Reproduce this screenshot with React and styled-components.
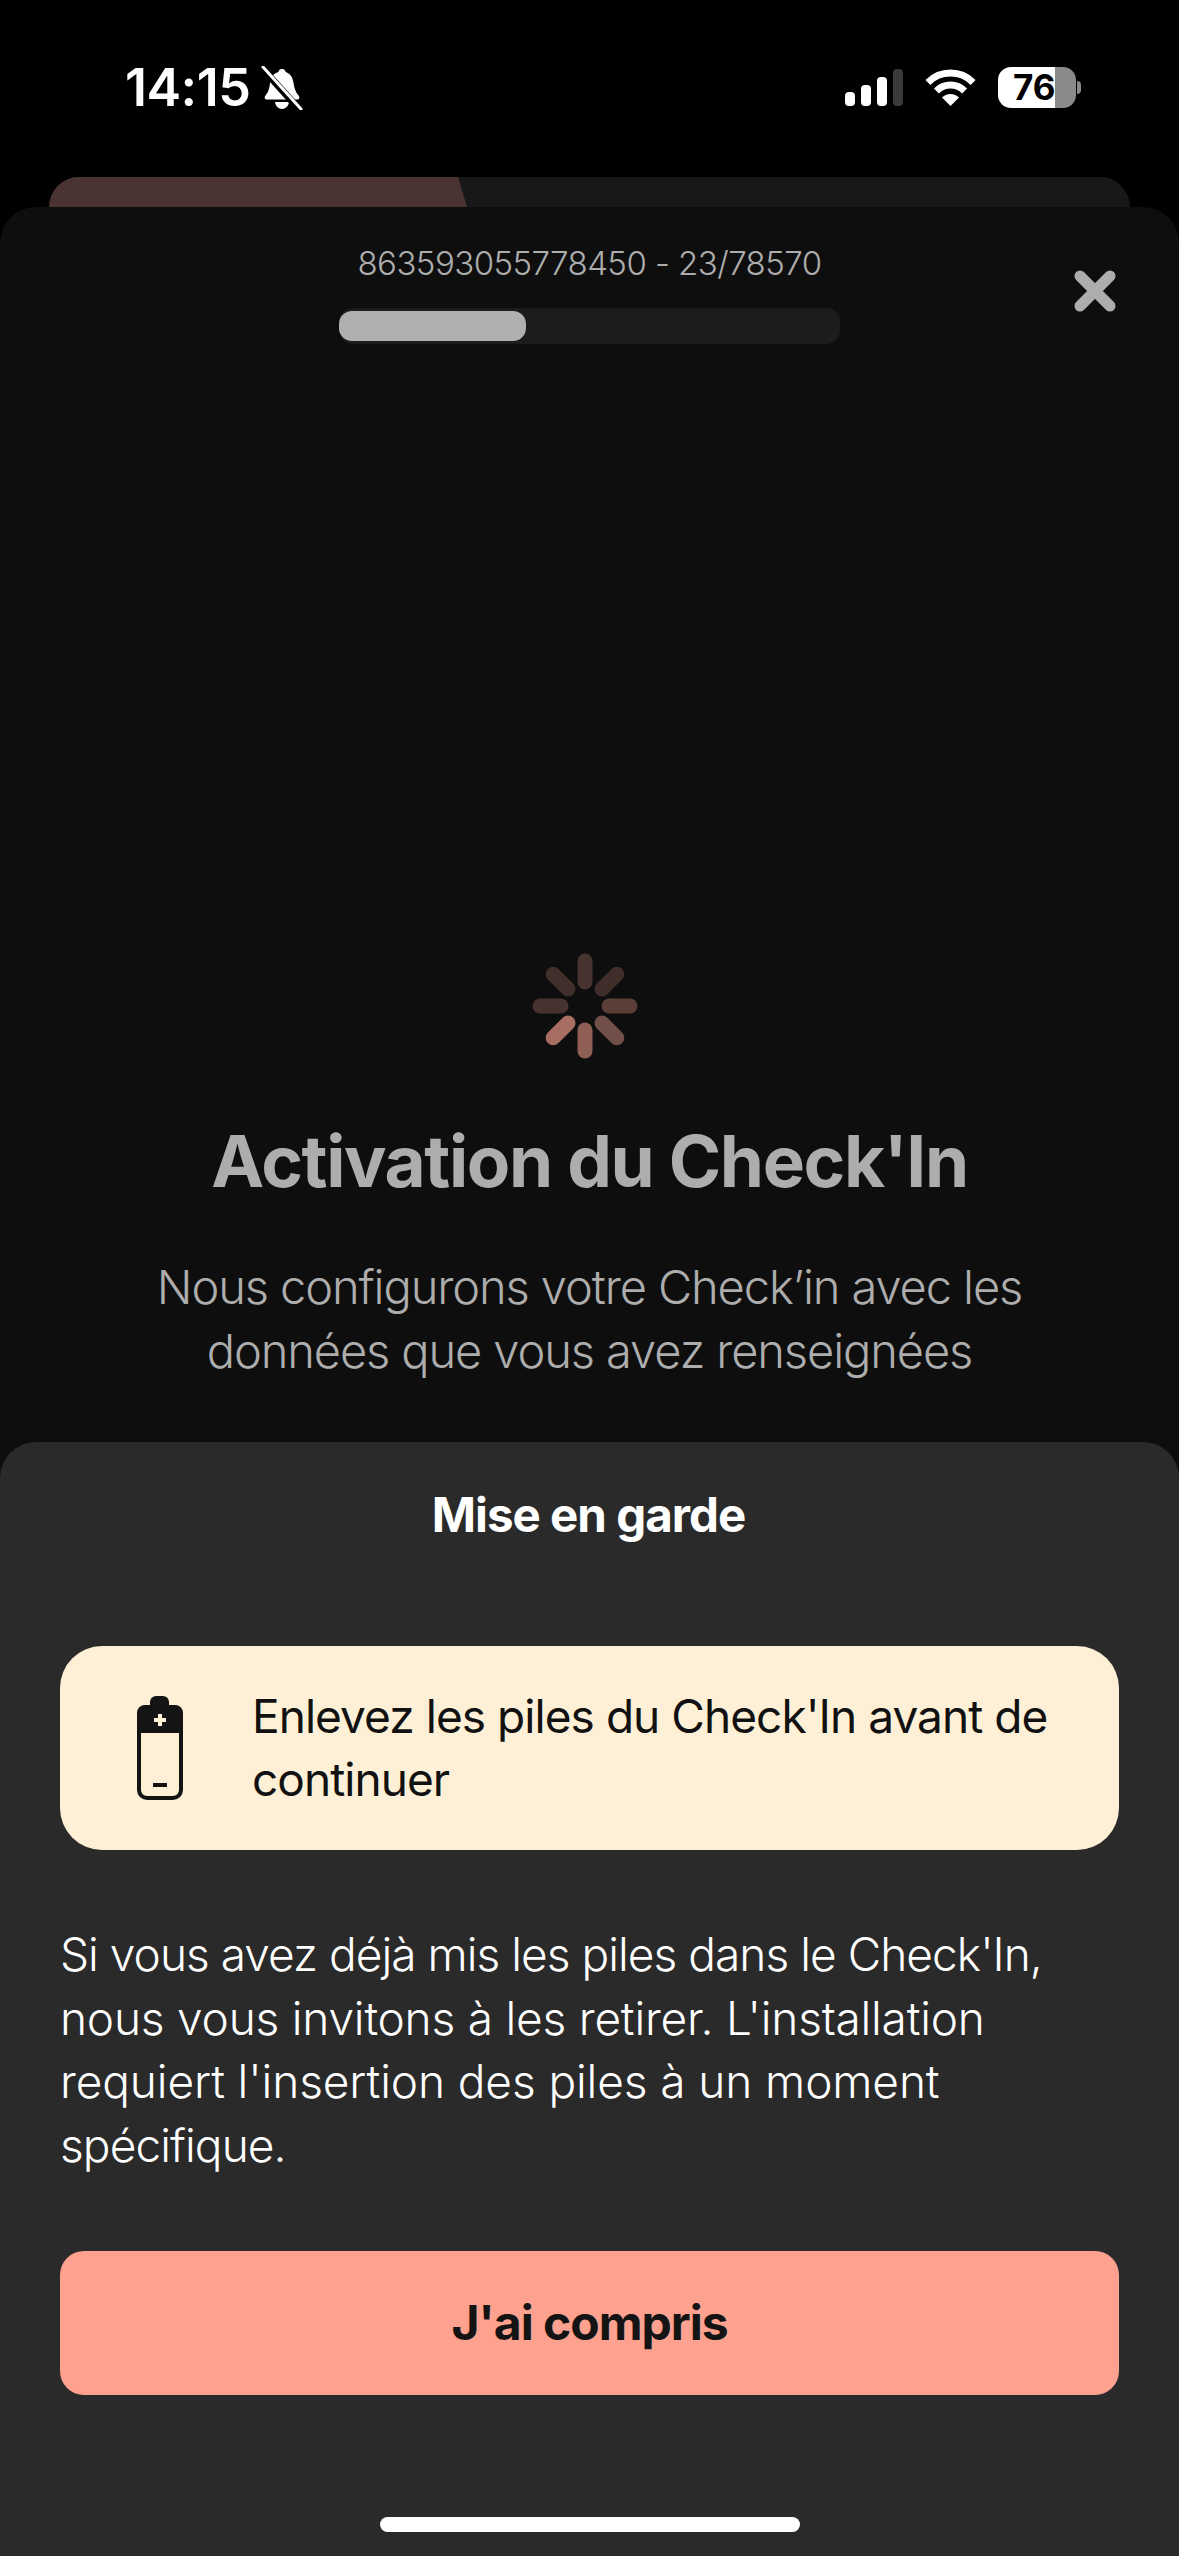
import styled, { createGlobalStyle } from "styled-components";

const GlobalStyle = createGlobalStyle`
  html, body {
    margin: 0;
    padding: 0;
    background: #000;
  }
  * {
    box-sizing: border-box;
  }
`;

const Page = styled.div`
  position: relative;
  width: 1179px;
  height: 2556px;
  overflow: hidden;
  display: flex;
  flex-direction: column;
  background: #000;
  font-family: Inter, "Liberation Sans", sans-serif;
`;

const StatusBar = styled.div`
  height: 177px;
  flex-shrink: 0;
  padding: 62px 98px 0 125px;
  display: flex;
  justify-content: space-between;
  align-items: flex-start;
  color: #fff;
`;

const StatusLeft = styled.div`
  display: flex;
  align-items: center;
  gap: 11px;
`;

const Time = styled.div`
  font-size: 52px;
  font-weight: 600;
  line-height: 52px;
  letter-spacing: -0.5px;
`;

const StatusRight = styled.div`
  display: flex;
  align-items: center;
  gap: 22px;
  padding-top: 5px;
`;

const BatteryWrap = styled.div`
  display: flex;
  align-items: center;
  gap: 1px;
`;

const BatteryBody = styled.div`
  width: 78px;
  height: 41px;
  border-radius: 13px;
  background: linear-gradient(to right, #fff 0 57px, #8a8a8a 57px);
  color: #000;
  font-size: 35px;
  font-weight: 700;
  line-height: 41px;
  padding-left: 15px;
`;

const BatteryNub = styled.div`
  width: 4px;
  height: 13px;
  border-radius: 0 6px 6px 0;
  background: #8a8a8a;
`;

const BackCard = styled.div`
  position: relative;
  height: 60px;
  flex-shrink: 0;
  margin: 0 49px -30px;
  border-radius: 30px 30px 0 0;
  background: #18181a;
  overflow: hidden;
`;

const BackCardFill = styled.div`
  width: 427px;
  height: 100%;
  background: #4a3431;
  clip-path: polygon(0 0, 409px 0, 100% 100%, 0 100%);
`;

const Sheet = styled.div`
  position: relative;
  flex: 1;
  border-radius: 36px 36px 0 0;
  background: #0e0e0e;
  display: flex;
  flex-direction: column;
  align-items: center;
  padding-top: 36px;
`;

const Serial = styled.div`
  font-size: 33px;
  font-weight: 300;
  line-height: 40px;
  color: #adadad;
  letter-spacing: -0.55px;
`;

const Track = styled.div`
  width: 501px;
  height: 36px;
  margin-top: 25px;
  border-radius: 14px;
  background: #1c1c1c;
  display: flex;
  align-items: center;
`;

const TrackFill = styled.div`
  height: 30px;
  border-radius: 13px;
  background: #b0b0b0;
`;

const CloseButton = styled.div`
  position: absolute;
  top: 63px;
  right: 63px;
  width: 42px;
  height: 42px;
  line-height: 0;
`;

const Spinner = styled.svg`
  margin: 609px 9px 0 0;
  width: 106px;
  height: 106px;
  flex-shrink: 0;
`;

const Title = styled.h1`
  margin: 59px 0 0;
  font-size: 71px;
  font-weight: 700;
  line-height: 86px;
  color: #adadad;
  letter-spacing: -1.4px;
`;

const Subtitle = styled.p`
  margin: 51px 0 0;
  font-size: 47px;
  font-weight: 300;
  line-height: 64px;
  color: #adadad;
  text-align: center;
  letter-spacing: -1.1px;
`;

const BottomSheet = styled.div`
  position: absolute;
  left: 0;
  right: 0;
  bottom: 0;
  height: 1114px;
  border-radius: 36px 36px 0 0;
  background: #2a2a2a;
  padding: 40px 60px 0;
  display: flex;
  flex-direction: column;
`;

const SheetTitle = styled.h2`
  margin: 0 2px 0 0;
  font-size: 47.500px;
  font-weight: 700;
  line-height: 66px;
  color: #fff;
  text-align: center;
  letter-spacing: -1px;
`;

const Notice = styled.div`
  margin-top: 98px;
  height: 204px;
  border-radius: 42px;
  background: #fef0d6;
  display: flex;
  align-items: center;
  gap: 69px;
  padding: 0 40px 0 77px;
`;

const NoticeText = styled.div`
  font-size: 46px;
  font-weight: 400;
  line-height: 63px;
  color: #111;
  letter-spacing: -0.95px;
`;

const Paragraph = styled.p`
  margin: 73px 0 0;
  font-size: 46px;
  font-weight: 300;
  line-height: 63.7px;
  color: #fff;
`;

const ParagraphLine = styled.span`
  display: block;
  letter-spacing: ${(props) => props.$spacing};
`;

const PrimaryButton = styled.button`
  margin-top: 73px;
  height: 144px;
  border: none;
  border-radius: 24px;
  background: #ffa18f;
  color: #141414;
  font-family: inherit;
  font-size: 48px;
  font-weight: 700;
  letter-spacing: -1px;
`;

const HomeIndicator = styled.div`
  position: absolute;
  left: 380px;
  bottom: 24px;
  width: 420px;
  height: 15px;
  border-radius: 8px;
  background: #fff;
`;

const spinnerBars = [
  { angle: 0, color: "#46322e" },
  { angle: 45, color: "#402e2a" },
  { angle: 90, color: "#5a3f39" },
  { angle: 135, color: "#72504a" },
  { angle: 180, color: "#8f5f56" },
  { angle: 225, color: "#a86e63" },
  { angle: 270, color: "#46322e" },
  { angle: 315, color: "#412f2b" },
];

const BellSlash = () => (
  <svg width="42" height="44" viewBox="0 0 42 44">
    <path
      d="M21 3c-2 0-3.400 1.300-3.600 3C12 7.500 9.500 12 9 17c-.4 5-1.500 9-4.500 12.500-1.500 2-1 4 1.500 4h30c2.500 0 3-2 1.500-4C34.500 26 33 21 32.500 17 32 12 29.500 7.500 24.600 6 24.400 4.300 23 3 21 3z"
      fill="#fff"
    />
    <path d="M14 36h14c-.5 4-3.500 7-7 7s-6.500-3-7-7z" fill="#fff" />
    <path d="M2 3l36 40" stroke="#000" strokeWidth="7" />
    <path d="M2 1l38 42" stroke="#fff" strokeWidth="3" strokeLinecap="round" />
  </svg>
);

const SignalBars = () => (
  <svg width="58" height="37" viewBox="0 0 58 37">
    <rect x="0" y="23" width="10" height="14" rx="4" fill="#fff" />
    <rect x="16" y="16" width="10" height="21" rx="4" fill="#fff" />
    <rect x="32" y="8" width="10" height="29" rx="4" fill="#fff" />
    <rect x="48" y="0" width="10" height="37" rx="4" fill="#3a3a3a" />
  </svg>
);

const Wifi = () => (
  <svg width="51" height="37" viewBox="0 0 51 37" fill="none">
    <path d="M2.900 13.400A32 32 0 0 1 48.100 13.400" stroke="#fff" strokeWidth="7" />
    <path d="M11.400 21.900A20 20 0 0 1 39.600 21.900" stroke="#fff" strokeWidth="7" />
    <path d="M25.500 37L17 28.500A12 12 0 0 1 34 28.500Z" fill="#fff" />
  </svg>
);

const BatteryIcon = () => (
  <svg width="46" height="104" viewBox="0 0 46 104" style={{ flexShrink: 0 }}>
    <path d="M13 10V6a6 6 0 0 1 6-6h7a6 6 0 0 1 6 6v4z" fill="#141414" />
    <rect x="2" y="11" width="42" height="91" rx="8" fill="none" stroke="#141414" strokeWidth="4" />
    <path d="M0 37V17a8 8 0 0 1 8-8h30a8 8 0 0 1 8 8v20z" fill="#141414" />
    <path d="M23 18v12M17 24h12" stroke="#fef0d6" strokeWidth="4" />
    <rect x="16" y="87" width="14" height="4" fill="#141414" />
  </svg>
);

const App = () => {
  return (
    <Page>
      <GlobalStyle />
      <StatusBar>
        <StatusLeft>
          <Time>14:15</Time>
          <BellSlash />
        </StatusLeft>
        <StatusRight>
          <SignalBars />
          <Wifi />
          <BatteryWrap>
            <BatteryBody>76</BatteryBody>
            <BatteryNub />
          </BatteryWrap>
        </StatusRight>
      </StatusBar>
      <BackCard>
        <BackCardFill />
      </BackCard>
      <Sheet>
        <Serial>863593055778450 - 23/78570</Serial>
        <Track>
          <TrackFill style={{ width: `${(187 / 501) * 100}%` }} />
        </Track>
        <CloseButton>
          <svg width="42" height="42" viewBox="0 0 42 42">
            <path d="M6 6l30 30M36 6L6 36" stroke="#adadad" strokeWidth="11" strokeLinecap="round" />
          </svg>
        </CloseButton>
        <Spinner viewBox="-53 -53 106 106">
          {spinnerBars.map((bar) => (
            <line
              key={bar.angle}
              x1="0"
              y1="-24"
              x2="0"
              y2="-45"
              stroke={bar.color}
              strokeWidth="15"
              strokeLinecap="round"
              transform={`rotate(${bar.angle})`}
            />
          ))}
        </Spinner>
        <Title>Activation du Check'In</Title>
        <Subtitle>
          Nous configurons votre Check’in avec les
          <br />
          données que vous avez renseignées
        </Subtitle>
      </Sheet>
      <BottomSheet>
        <SheetTitle>Mise en garde</SheetTitle>
        <Notice>
          <BatteryIcon />
          <NoticeText>Enlevez les piles du Check'In avant de continuer</NoticeText>
        </Notice>
        <Paragraph>
          <ParagraphLine $spacing="-0.96px">Si vous avez déjà mis les piles dans le Check'In,</ParagraphLine>
          <ParagraphLine $spacing="-0.2px">nous vous invitons à les retirer. L'installation</ParagraphLine>
          <ParagraphLine $spacing="-0.1px">requiert l'insertion des piles à un moment</ParagraphLine>
          <ParagraphLine $spacing="-0.9px">spécifique.</ParagraphLine>
        </Paragraph>
        <PrimaryButton>J'ai compris</PrimaryButton>
        <HomeIndicator />
      </BottomSheet>
    </Page>
  );
};

export default App;
